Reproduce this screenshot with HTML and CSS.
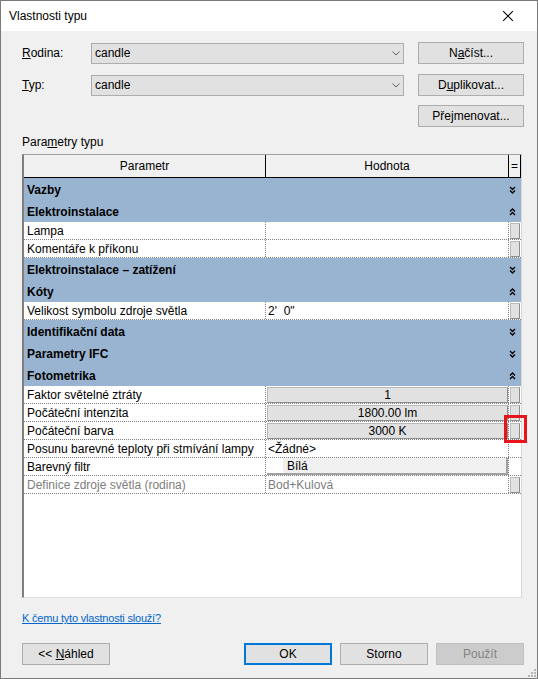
FILE: index.html
```html
<!DOCTYPE html>
<html lang="cs">
<head>
<meta charset="utf-8">
<title>Vlastnosti typu</title>
<link rel="stylesheet" href="styles.css">
</head>
<body>
<div class="window">
  <div class="titlebar">
    <span class="title">Vlastnosti typu</span>
    <svg class="close" width="10" height="10" viewBox="0 0 10 10"><path d="M0 0L10 10M10 0L0 10" stroke="#000" stroke-width="1.1" fill="none"/></svg>
  </div>
  <div class="content">
    <div class="form-row">
      <span class="lbl"><u>R</u>odina:</span>
      <div class="combo"><span>candle</span><svg width="8" height="5" viewBox="0 0 8 5"><path d="M0.5 0.5L4 4L7.5 0.5" stroke="#606060" fill="none"/></svg></div>
      <button class="btn">N<u>a</u>číst...</button>
    </div>
    <div class="form-row">
      <span class="lbl"><u>T</u>yp:</span>
      <div class="combo"><span>candle</span><svg width="8" height="5" viewBox="0 0 8 5"><path d="M0.5 0.5L4 4L7.5 0.5" stroke="#606060" fill="none"/></svg></div>
      <button class="btn">D<u>u</u>plikovat...</button>
    </div>
    <div class="form-row end">
      <button class="btn">Pře<u>j</u>menovat...</button>
    </div>
    <div class="section-label">Para<u>m</u>etry typu</div>
    <div class="grid">
      <div class="ghead">
        <div class="hc c1">Parametr</div>
        <div class="hc c2">Hodnota</div>
        <div class="hc c3">=</div>
      </div>

      <div class="group"><span class="gname">Vazby</span><span class="gchev"><svg width="7" height="8" viewBox="0 0 7 8"><path d="M1 1L3.5 3.5L6 1M1 4.5L3.5 7L6 4.5" fill="none" stroke="#000" stroke-width="1.3"/></svg></span></div>
      <div class="group"><span class="gname">Elektroinstalace</span><span class="gchev"><svg width="7" height="8" viewBox="0 0 7 8"><path d="M1 3.5L3.5 1L6 3.5M1 7L3.5 4.5L6 7" fill="none" stroke="#000" stroke-width="1.3"/></svg></span></div>
      <div class="prow"><div class="c1">Lampa</div><div class="c2"></div><div class="c3"><span class="mini"></span></div></div>
      <div class="prow"><div class="c1">Komentáře k příkonu</div><div class="c2"></div><div class="c3"><span class="mini"></span></div></div>
      <div class="group"><span class="gname">Elektroinstalace – zatížení</span><span class="gchev"><svg width="7" height="8" viewBox="0 0 7 8"><path d="M1 1L3.5 3.5L6 1M1 4.5L3.5 7L6 4.5" fill="none" stroke="#000" stroke-width="1.3"/></svg></span></div>
      <div class="group"><span class="gname">Kóty</span><span class="gchev"><svg width="7" height="8" viewBox="0 0 7 8"><path d="M1 3.5L3.5 1L6 3.5M1 7L3.5 4.5L6 7" fill="none" stroke="#000" stroke-width="1.3"/></svg></span></div>
      <div class="prow"><div class="c1">Velikost symbolu zdroje světla</div><div class="c2 val">2'&nbsp;&nbsp;0"</div><div class="c3"><span class="mini"></span></div></div>
      <div class="group"><span class="gname">Identifikační data</span><span class="gchev"><svg width="7" height="8" viewBox="0 0 7 8"><path d="M1 1L3.5 3.5L6 1M1 4.5L3.5 7L6 4.5" fill="none" stroke="#000" stroke-width="1.3"/></svg></span></div>
      <div class="group"><span class="gname">Parametry IFC</span><span class="gchev"><svg width="7" height="8" viewBox="0 0 7 8"><path d="M1 1L3.5 3.5L6 1M1 4.5L3.5 7L6 4.5" fill="none" stroke="#000" stroke-width="1.3"/></svg></span></div>
      <div class="group"><span class="gname">Fotometrika</span><span class="gchev"><svg width="7" height="8" viewBox="0 0 7 8"><path d="M1 3.5L3.5 1L6 3.5M1 7L3.5 4.5L6 7" fill="none" stroke="#000" stroke-width="1.3"/></svg></span></div>
      <div class="prow"><div class="c1">Faktor světelné ztráty</div><div class="c2"><span class="vbtn">1</span></div><div class="c3"><span class="mini"></span></div></div>
      <div class="prow"><div class="c1">Počáteční intenzita</div><div class="c2"><span class="vbtn">1800.00 lm</span></div><div class="c3"><span class="mini"></span></div></div>
      <div class="prow"><div class="c1">Počáteční barva</div><div class="c2"><span class="vbtn">3000 K</span></div><div class="c3 marked"><span class="mini"></span><span class="redbox"></span></div></div>
      <div class="prow"><div class="c1">Posunu barevné teploty při stmívání lampy</div><div class="c2 val">&lt;Žádné&gt;</div><div class="c3"></div></div>
      <div class="prow"><div class="c1">Barevný filtr</div><div class="c2"><span class="colorbox"><span class="swatch"></span><span class="cname">Bílá</span></span></div><div class="c3"></div></div>
      <div class="prow ro"><div class="c1">Definice zdroje světla (rodina)</div><div class="c2 val">Bod+Kulová</div><div class="c3"><span class="mini"></span></div></div>
    </div>
    <a class="help" href="#">K čemu tyto vlastnosti slouží?</a>
    <div class="footer">
      <button class="btn fbtn">&lt;&lt; <u>N</u>áhled</button>
      <button class="btn fbtn ok">OK</button>
      <button class="btn fbtn">Storno</button>
      <button class="btn fbtn disabled">Použít</button>
    </div>
  </div>
  <svg class="grip" width="8" height="8" viewBox="0 0 8 8"><path d="M6 0h2v2h-2zM3 3h2v2h-2zM6 3h2v2h-2zM0 6h2v2h-2zM3 6h2v2h-2zM6 6h2v2h-2z" fill="#b4b4b4"/></svg>
</div>
</body>
</html>
```
FILE: styles.css
```css
* { box-sizing: border-box; }
html, body { margin: 0; padding: 0; }
body {
  width: 538px;
  height: 679px;
  overflow: hidden;
  background: #f0f0f0;
  font-family: "Liberation Sans", Arial, sans-serif;
  font-size: 12px;
  color: #000;
}
.window {
  position: relative;
  width: 538px;
  height: 679px;
  border: 1px solid #7a7a7a;
  background: #f0f0f0;
  display: flex;
  flex-direction: column;
}
.titlebar {
  height: 30px;
  flex-shrink: 0;
  background: #fff;
  display: flex;
  align-items: center;
  justify-content: space-between;
  padding: 0 24px 0 8px;
}
.title { line-height: 16px; }
.close { display: block; }
.content {
  flex: 1;
  display: flex;
  flex-direction: column;
  padding: 11px 13px 0 21px;
}
.form-row {
  display: flex;
  align-items: center;
  height: 22px;
}
.form-row + .form-row { margin-top: 10px; }
.form-row.end { justify-content: flex-end; margin-top: 9px; }
.lbl { width: 69px; }
.combo {
  width: 313px;
  height: 21px;
  background: #e1e1e1;
  border: 1px solid #adadad;
  display: flex;
  align-items: center;
  justify-content: space-between;
  padding: 0 3px 0 3px;
}
.combo svg { display: block; }
.btn {
  font: inherit;
  color: #000;
  width: 106px;
  height: 22px;
  margin: 0 0 0 14px;
  padding: 0;
  background: #e1e1e1;
  border: 1px solid #adadad;
  text-align: center;
}
.section-label {
  margin-top: 7px;
  line-height: 16px;
  height: 16px;
}
.grid {
  margin-top: 4px;
  width: 500px;
  height: 444px;
  background: #fff;
  border-left: 2px solid #7e7e7e;
  border-top: 1px solid #a0a0a0;
  border-right: 1px solid #d8d8d8;
  border-bottom: 1px solid #e0e0e0;
}
.ghead {
  display: flex;
  height: 23px;
  background: #f0f0f0;
  border-bottom: 1px solid #000;
  width: 497px;
}
.c1 { width: 242px; }
.c2 { width: 243px; }
.c3 { width: 12px; }
.hc {
  border-right: 1px solid #000;
  text-align: center;
  line-height: 22px;
}
.group {
  display: flex;
  align-items: center;
  width: 497px;
  height: 22px;
  background: #99b4d1;
  font-weight: bold;
  padding-top: 1px;
}
.gname { flex: 1; padding-left: 3px; }
.gchev { width: 12px; display: flex; }
.gchev svg { display: block; margin-left: 0; }
.prow {
  display: flex;
  width: 497px;
  height: 18px;
  border-bottom: 1px dotted #808080;
  line-height: 18px;
}
.prow .c1 {
  border-right: 1px dotted #808080;
  padding-left: 3px;
  white-space: nowrap;
  overflow: hidden;
}
.prow .c2 {
  border-right: 1px dotted #808080;
  white-space: nowrap;
}
.prow .c2.val { padding-left: 2px; }
.prow.ro { color: #7d7d7d; }
.vbtn {
  display: block;
  margin: 1px 0 0 1px;
  height: 16px;
  line-height: 15px;
  text-align: center;
  background: #e1e1e1;
  border: 1px solid #b8b8b8;
  border-right-color: #8e8e8e;
  border-bottom-color: #8e8e8e;
}
.mini {
  display: block;
  margin: 1px 0 0 1px;
  width: 10px;
  height: 16px;
  background: #e1e1e1;
  border: 1px solid #bcbcbc;
  border-right-color: #8e8e8e;
  border-bottom-color: #8e8e8e;
}
.colorbox {
  display: flex;
  margin-left: 1px;
  height: 17px;
  background: #f0f0f0;
  border-right: 2px solid #a0a0a0;
  border-bottom: 2px solid #a0a0a0;
}
.swatch { width: 16px; background: #fff; }
.cname { padding-left: 4px; line-height: 16px; }
.c3.marked { position: relative; }
.redbox {
  position: absolute;
  left: -5px;
  top: -7px;
  width: 23px;
  height: 28px;
  border: 3px solid #e8141c;
}
.help {
  margin-top: 12px;
  line-height: 16px;
  font-size: 11px;
  letter-spacing: -0.2px;
  color: #0066cc;
  text-decoration: underline;
  align-self: flex-start;
}
.footer {
  margin-top: 17px;
  display: flex;
  gap: 8px;
}
.fbtn { width: 88px; margin: 0; }
.fbtn:first-child { margin-right: auto; }
.fbtn.ok { border: 2px solid #0078d7; }
.fbtn.disabled {
  background: #cccccc;
  border-color: #bfbfbf;
  color: #838383;
}
.grip {
  position: absolute;
  right: 1px;
  bottom: 1px;
}
```
